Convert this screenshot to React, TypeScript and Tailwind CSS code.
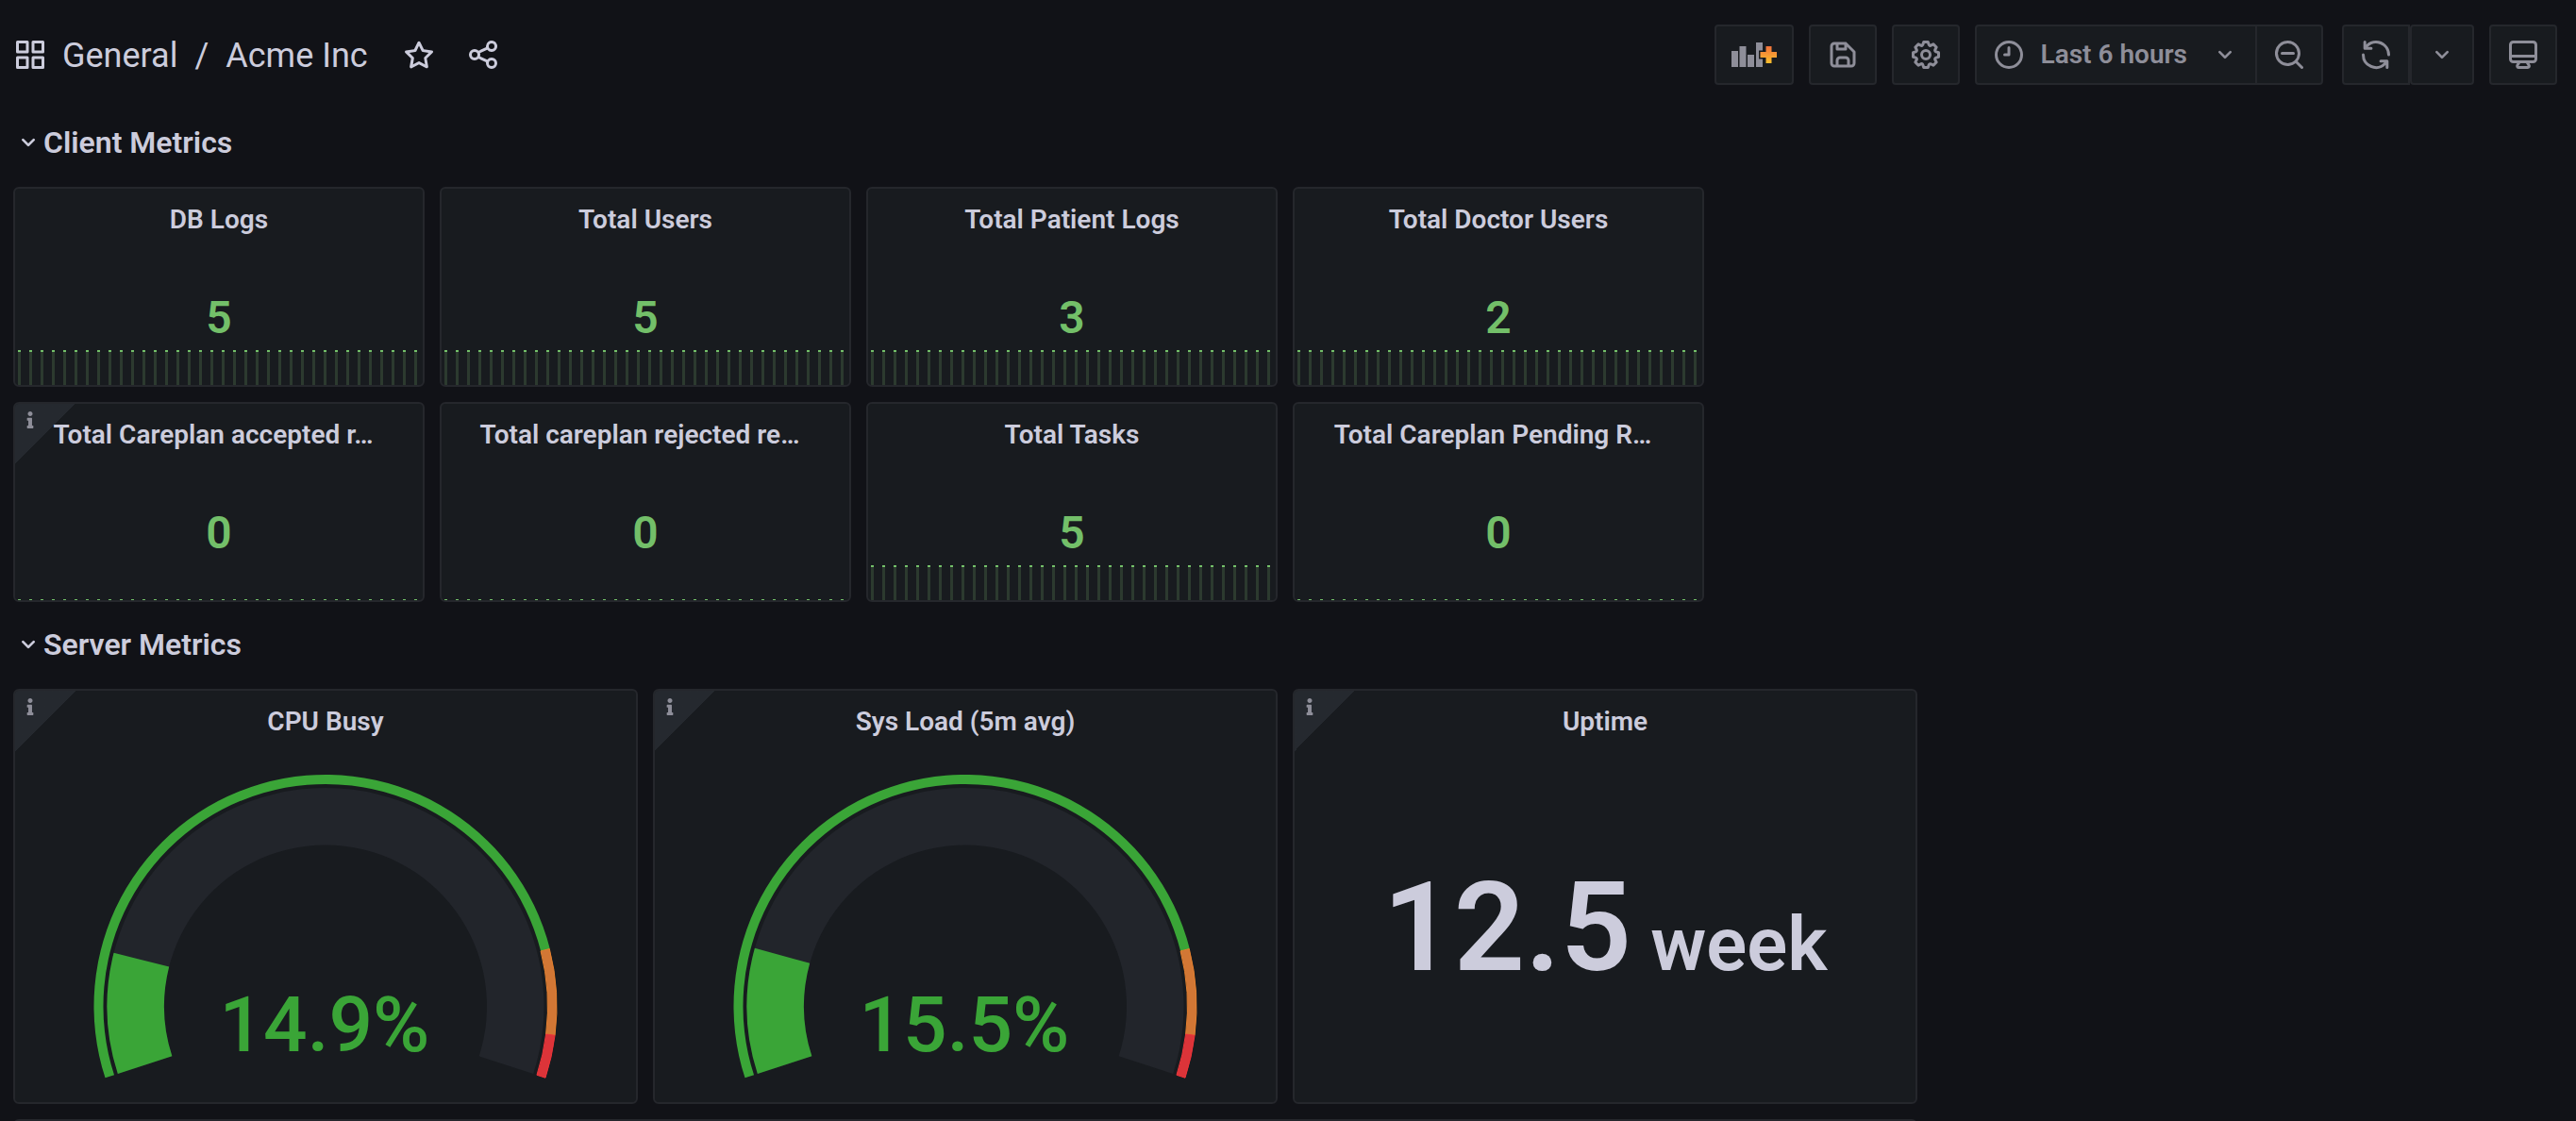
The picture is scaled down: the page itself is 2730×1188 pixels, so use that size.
import { useState, type ReactNode } from "react";
import { FaInfo } from "react-icons/fa";

const ICONS = {
  apps: "M10,13H3a1,1,0,0,0-1,1v7a1,1,0,0,0,1,1h7a1,1,0,0,0,1-1V14A1,1,0,0,0,10,13ZM9,20H4V15H9ZM21,2H14a1,1,0,0,0-1,1v7a1,1,0,0,0,1,1h7a1,1,0,0,0,1-1V3A1,1,0,0,0,21,2ZM20,9H15V4h5Zm1,4H14a1,1,0,0,0-1,1v7a1,1,0,0,0,1,1h7a1,1,0,0,0,1-1V14A1,1,0,0,0,21,13Zm-1,7H15V15h5ZM10,2H3A1,1,0,0,0,2,3v7a1,1,0,0,0,1,1h7a1,1,0,0,0,1-1V3A1,1,0,0,0,10,2ZM9,9H4V4H9Z",
  star: "M22,9.67A1,1,0,0,0,21.14,9l-5.69-.83L12.9,3a1,1,0,0,0-1.8,0L8.55,8.16,2.86,9a1,1,0,0,0-.81.68,1,1,0,0,0,.25,1l4.13,4-1,5.68A1,1,0,0,0,6.9,21.44L12,18.77l5.1,2.67a.93.93,0,0,0,.46.12,1,1,0,0,0,.59-.19,1,1,0,0,0,.4-1l-1-5.68,4.13-4A1,1,0,0,0,22,9.67Zm-6.15,4a1,1,0,0,0-.29.88l.72,4.2-3.76-2a1.06,1.06,0,0,0-.94,0l-3.76,2,.72-4.2a1,1,0,0,0-.29-.88l-3-3,4.21-.61a1,1,0,0,0,.76-.55L12,5.7l1.88,3.82a1,1,0,0,0,.76.55l4.21.61Z",
  share: "M18,14a4,4,0,0,0-3.08,1.48l-5.1-2.35a3.64,3.64,0,0,0,0-2.26l5.1-2.35A4,4,0,1,0,14,6a4.17,4.17,0,0,0,.07.71L8.79,9.14a4,4,0,1,0,0,5.72l5.28,2.43A4.17,4.17,0,0,0,14,18a4,4,0,1,0,4-4ZM18,4a2,2,0,1,1-2,2A2,2,0,0,1,18,4ZM6,14a2,2,0,1,1,2-2A2,2,0,0,1,6,14Zm12,6a2,2,0,1,1,2-2A2,2,0,0,1,18,20Z",
  save: "m20.71 9.29-6-6a1 1 0 0 0-.32-.21A1.09 1.09 0 0 0 14 3H6a3 3 0 0 0-3 3v12a3 3 0 0 0 3 3h12a3 3 0 0 0 3-3v-8a1 1 0 0 0-.29-.71ZM9 5h4v2H9Zm6 14H9v-3a1 1 0 0 1 1-1h4a1 1 0 0 1 1 1Zm4-1a1 1 0 0 1-1 1h-1v-3a3 3 0 0 0-3-3h-4a3 3 0 0 0-3 3v3H6a1 1 0 0 1-1-1V6a1 1 0 0 1 1-1h1v3a1 1 0 0 0 1 1h6a1 1 0 0 0 1-1V6.41l4 4Z",
  clock: "M12 6a1 1 0 0 0-1 1v4H9a1 1 0 0 0 0 2h3a1 1 0 0 0 1-1V7a1 1 0 0 0-1-1Zm0-4a10 10 0 1 0 10 10A10 10 0 0 0 12 2Zm0 18a8 8 0 1 1 8-8 8 8 0 0 1-8 8Z",
  zoomOut: "M21.71,20.29,18,16.61A9,9,0,1,0,16.61,18l3.68,3.68a1,1,0,0,0,1.42,0A1,1,0,0,0,21.71,20.29ZM11,18a7,7,0,1,1,7-7A7,7,0,0,1,11,18Zm4-8H7a1,1,0,0,0,0,2h8a1,1,0,0,0,0-2Z",
  sync: "M19.91,15.51H15.38a1,1,0,0,0,0,2h2.4A8,8,0,0,1,4,12a1,1,0,1,0-2,0,10,10,0,0,0,16.88,7.23V21a1,1,0,0,0,2,0V16.5A1,1,0,0,0,19.91,15.51ZM12,2A10,10,0,0,0,5.12,4.77V3a1,1,0,0,0-2,0V7.5a1,1,0,0,0,1,1h4.5a1,1,0,0,0,0-2H6.22A8,8,0,0,1,20,12a1,1,0,0,0,2,0A10,10,0,0,0,12,2Z",
  monitor: "M19,2H5A3,3,0,0,0,2,5V15a3,3,0,0,0,3,3H7.64l-.58,1a2,2,0,0,0,0,2,2,2,0,0,0,1.75,1h6.46A2,2,0,0,0,17,21a2,2,0,0,0,0-2l-.59-1H19a3,3,0,0,0,3-3V5A3,3,0,0,0,19,2ZM8.77,20,10,18H14l1.2,2ZM20,15a1,1,0,0,1-1,1H5a1,1,0,0,1-1-1V14H20Zm0-3H4V5A1,1,0,0,1,5,4H19a1,1,0,0,1,1,1Z",
  angleDown: "M17,9.17a1,1,0,0,0-1.41,0L12,12.71,8.46,9.17a1,1,0,0,0-1.41,0,1,1,0,0,0,0,1.42l4.24,4.24a1,1,0,0,0,1.42,0L17,10.59A1,1,0,0,0,17,9.17Z",
  cog: "M21.32,9.55l-1.89-.63.89-1.78A1,1,0,0,0,20.13,6L18,3.87a1,1,0,0,0-1.15-.19l-1.78.89-.63-1.89A1,1,0,0,0,13.5,2h-3a1,1,0,0,0-.95.68L8.92,4.57,7.14,3.68A1,1,0,0,0,6,3.87L3.87,6a1,1,0,0,0-.19,1.15l.89,1.78-1.89.63A1,1,0,0,0,2,10.5v3a1,1,0,0,0,.68.95l1.89.63-.89,1.78A1,1,0,0,0,3.87,18L6,20.13a1,1,0,0,0,1.15.19l1.78-.89.63,1.89a1,1,0,0,0,.95.68h3a1,1,0,0,0,.95-.68l.63-1.89,1.78.89A1,1,0,0,0,18,20.13L20.13,18a1,1,0,0,0,.19-1.15l-.89-1.78,1.89-.63A1,1,0,0,0,22,13.5v-3A1,1,0,0,0,21.32,9.55ZM20,12.78l-1.2.4A2,2,0,0,0,17.64,16l.57,1.14-1.1,1.1L16,17.64a2,2,0,0,0-2.79,1.16l-.4,1.2H11.22l-.4-1.2A2,2,0,0,0,8,17.64l-1.14.57-1.1-1.1L6.36,16A2,2,0,0,0,5.2,13.18L4,12.78V11.22l1.2-.4A2,2,0,0,0,6.36,8L5.79,6.89l1.1-1.1L8,6.36A2,2,0,0,0,10.82,5.2l.4-1.2h1.56l.4,1.2A2,2,0,0,0,16,6.36l1.14-.57,1.1,1.1L17.64,8a2,2,0,0,0,1.16,2.79l1.2.4ZM12,8a4,4,0,1,0,4,4A4,4,0,0,0,12,8Zm0,6a2,2,0,1,1,2-2A2,2,0,0,1,12,14Z",
};

function Icon({ name, className = "size-9" }: { name: keyof typeof ICONS; className?: string }) {
  return (
    <svg viewBox="0 0 24 24" fill="currentColor" aria-hidden="true" className={`shrink-0 ${className}`}>
      <path d={ICONS[name]} />
    </svg>
  );
}

function AddPanelIcon() {
  return (
    <svg viewBox="0 0 48 26" aria-hidden="true" className="h-[26px] w-12 shrink-0">
      <defs>
        <linearGradient id="plus" x1="0" y1="0" x2="0" y2="1">
          <stop offset="0" stopColor="#f0713c" />
          <stop offset="1" stopColor="#fbc02d" />
        </linearGradient>
      </defs>
      <g fill="#8e8e99">
        <rect x="0" y="9" width="7" height="17" />
        <rect x="8.5" y="4" width="7" height="22" />
        <rect x="17" y="13" width="7" height="13" />
        <rect x="26" y="0" width="7" height="26" />
      </g>
      <path
        d="M36.500 4h6v6h6v6h-6v6h-6v-6h-6v-6h6z"
        fill="url(#plus)"
        stroke="#181b1f"
        strokeWidth="3"
        paintOrder="stroke"
      />
    </svg>
  );
}

function ToolButton({ label, className = "", children }: { label: string; className?: string; children: ReactNode }) {
  return (
    <button
      type="button"
      aria-label={label}
      className={`flex h-16 items-center rounded-sm border-2 border-[#25272c] bg-[#181b1f] px-4 text-[28px] font-semibold text-[#8e8e99] ${className}`}
    >
      {children}
    </button>
  );
}

function Toolbar() {
  return (
    <header className="flex h-[116px] items-center justify-between">
      <div className="flex items-center">
        <Icon name="apps" />
        <nav aria-label="Breadcrumb" className="ml-4 flex items-center gap-[18px] pt-0.5 text-4xl">
          <a href="#general">General</a>
          <span>/</span>
          <a href="#acme">Acme Inc</a>
        </nav>
        <button type="button" aria-label="Mark as favorite" className="ml-9">
          <Icon name="star" />
        </button>
        <button type="button" aria-label="Share dashboard" className="ml-8">
          <Icon name="share" />
        </button>
      </div>
      <div className="flex items-center gap-4">
        <ToolButton label="Add panel">
          <AddPanelIcon />
        </ToolButton>
        <ToolButton label="Save dashboard">
          <Icon name="save" />
        </ToolButton>
        <ToolButton label="Dashboard settings">
          <Icon name="cog" />
        </ToolButton>
        <div className="mr-1 flex">
          <ToolButton label="Time range" className="rounded-r-none">
            <Icon name="clock" />
            <span className="ml-4">Last 6 hours</span>
            <Icon name="angleDown" className="ml-6 size-8" />
          </ToolButton>
          <ToolButton label="Zoom out" className="-ml-0.5 rounded-l-none">
            <Icon name="zoomOut" />
          </ToolButton>
        </div>
        <div className="flex">
          <ToolButton label="Refresh" className="rounded-r-none">
            <Icon name="sync" />
          </ToolButton>
          <ToolButton label="Refresh interval">
            <Icon name="angleDown" className="size-8" />
          </ToolButton>
        </div>
        <ToolButton label="Cycle view mode">
          <Icon name="monitor" />
        </ToolButton>
      </div>
    </header>
  );
}

function Section({ title, children }: { title: string; children: ReactNode }) {
  const [open, setOpen] = useState(true);
  return (
    <section className="mb-4">
      <h2>
        <button
          type="button"
          aria-expanded={open}
          onClick={() => setOpen(!open)}
          className="flex h-[58px] items-center text-[32px] font-semibold"
        >
          <Icon name="angleDown" className="size-8" />
          {title}
        </button>
      </h2>
      {open && <div className="mt-[18px] grid grid-cols-24 gap-4">{children}</div>}
    </section>
  );
}

function Panel({
  title,
  info,
  className,
  children,
}: {
  title: string;
  info?: boolean;
  className: string;
  children: ReactNode;
}) {
  return (
    <article
      className={`relative flex flex-col overflow-hidden rounded-md border-2 border-[#25272c] bg-[#181b1f] ${className}`}
    >
      {info && (
        <span className="absolute top-0 left-0 size-16 bg-linear-135 from-[#25292f] from-50% to-transparent to-50% text-[#8e8e99]">
          <FaInfo className="absolute top-2 left-[7px] size-[18px]" />
        </span>
      )}
      <h3
        className={`relative flex h-[66px] shrink-0 items-center justify-center text-[28px] font-semibold whitespace-nowrap ${
          title.endsWith("…") ? "pr-3" : ""
        }`}
      >
        {title}
      </h3>
      {children}
    </article>
  );
}

function StatPanel({ title, value, info }: { title: string; value: number; info?: boolean }) {
  return (
    <Panel title={title} info={info} className="col-span-4 h-[212px]">
      <div className="flex flex-1 items-center justify-center text-5xl font-semibold text-[#73bf69]">{value}</div>
      <div className="absolute inset-x-0 bottom-0 flex justify-between pr-1.5 pl-[3px]">
        {Array.from({ length: 36 }, (_, i) => (
          <span
            key={i}
            className={
              value > 0 ? "h-[37px] w-[3px] border-t-2 border-[#73bf69] bg-[#2c3a2f]" : "h-px w-[3px] bg-[#73bf69]"
            }
          />
        ))}
      </div>
    </Panel>
  );
}

/* The dial sweeps 216 degrees clockwise, starting 18 degrees below the horizontal on the left. */
function arc(inner: number, outer: number, from: number, to: number) {
  const point = (r: number, share: number) => {
    const a = ((198 - 216 * share) * Math.PI) / 180;
    return `${(331 + r * Math.cos(a)).toFixed(2)} ${(270.5 - r * Math.sin(a)).toFixed(2)}`;
  };
  const large = (to - from) * 216 > 180 ? 1 : 0;
  return `M${point(outer, from)}A${outer} ${outer} 0 ${large} 1 ${point(outer, to)}L${point(inner, to)}A${inner} ${inner} 0 ${large} 0 ${point(inner, from)}Z`;
}

function GaugePanel({ title, value }: { title: string; value: number }) {
  return (
    <Panel title={title} info className="col-span-6 h-[440px]">
      <svg viewBox="2 2 658 370" role="img" aria-label={`${title} ${value}%`} className="min-h-0 w-full flex-1">
        <path d={arc(171, 231.5, 0, 1)} fill="#22252b" />
        <path d={arc(171, 231.5, 0, value / 100)} fill="#3aa537" />
        <path d={arc(235.5, 245.5, 0, 0.85)} fill="#3aa537" />
        <path d={arc(235.5, 245, 0.85, 0.95)} fill="#d27735" stroke="#e5812e" />
        <path d={arc(235.5, 245, 0.95, 1)} fill="#dc3439" stroke="#ee3439" />
        <text x="330" y="318" textAnchor="middle" className="fill-[#3aa537] text-[82px] font-medium">
          {value}%
        </text>
      </svg>
    </Panel>
  );
}

export default function App() {
  return (
    <div className="h-screen overflow-hidden bg-[#111217] pr-5 pl-3.5 font-['Roboto',sans-serif] text-[#ccccdc]">
      <Toolbar />
      <main className="pt-1.5">
        <Section title="Client Metrics">
          <div className="col-span-24 grid grid-cols-subgrid gap-y-4">
            <StatPanel title="DB Logs" value={5} />
            <StatPanel title="Total Users" value={5} />
            <StatPanel title="Total Patient Logs" value={3} />
            <StatPanel title="Total Doctor Users" value={2} />
          </div>
          <div className="col-span-24 grid grid-cols-subgrid gap-y-4">
            <StatPanel title="Total Careplan accepted r…" value={0} info />
            <StatPanel title="Total careplan rejected re…" value={0} />
            <StatPanel title="Total Tasks" value={5} />
            <StatPanel title="Total Careplan Pending R…" value={0} />
          </div>
        </Section>
        <Section title="Server Metrics">
          <GaugePanel title="CPU Busy" value={14.9} />
          <GaugePanel title="Sys Load (5m avg)" value={15.5} />
          <Panel title="Uptime" info className="col-span-6 h-[440px]">
            <div className="flex flex-1 items-center justify-center font-semibold">
              <p className="text-[132px] leading-none whitespace-nowrap">
                12.5<span className="ml-5 text-[80px]">week</span>
              </p>
            </div>
          </Panel>
          <div className="col-span-18 h-16 rounded-md border-2 border-[#25272c] bg-[#181b1f]" />
        </Section>
      </main>
    </div>
  );
}
